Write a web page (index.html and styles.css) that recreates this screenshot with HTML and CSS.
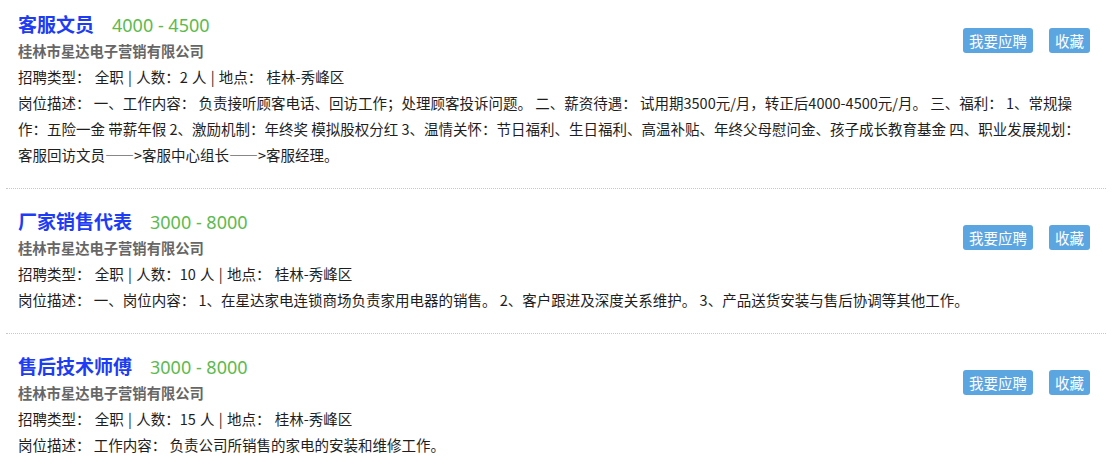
FILE: index.html
```html
<!DOCTYPE html>
<html lang="zh-CN">
<head>
<meta charset="utf-8">
<title>职位列表</title>
<link rel="stylesheet" href="styles.css">
</head>
<body>
<div class="job-list">
  <div class="job">
    <div class="actions">
      <a class="btn">我要应聘</a>
      <a class="btn">收藏</a>
    </div>
    <div class="title-row"><span class="title">客服文员</span><span class="salary">4000 - 4500</span></div>
    <div class="company">桂林市星达电子营销有限公司</div>
    <div class="meta">招聘类型： 全职 | 人数：2 人 | 地点： 桂林-秀峰区</div>
    <div class="desc">岗位描述： 一、工作内容： 负责接听顾客电话、回访工作；处理顾客投诉问题。 二、薪资待遇： 试用期3500元/月，转正后4000-4500元/月。 三、福利： 1、常规操作：五险一金 带薪年假 2、激励机制：年终奖 模拟股权分红 3、温情关怀：节日福利、生日福利、高温补贴、年终父母慰问金、孩子成长教育基金 四、职业发展规划：客服回访文员——&gt;客服中心组长——&gt;客服经理。</div>
  </div>
  <div class="job">
    <div class="actions">
      <a class="btn">我要应聘</a>
      <a class="btn">收藏</a>
    </div>
    <div class="title-row"><span class="title">厂家销售代表</span><span class="salary">3000 - 8000</span></div>
    <div class="company">桂林市星达电子营销有限公司</div>
    <div class="meta">招聘类型： 全职 | 人数：10 人 | 地点： 桂林-秀峰区</div>
    <div class="desc">岗位描述： 一、岗位内容： 1、在星达家电连锁商场负责家用电器的销售。 2、客户跟进及深度关系维护。 3、产品送货安装与售后协调等其他工作。</div>
  </div>
  <div class="job">
    <div class="actions">
      <a class="btn">我要应聘</a>
      <a class="btn">收藏</a>
    </div>
    <div class="title-row"><span class="title">售后技术师傅</span><span class="salary">3000 - 8000</span></div>
    <div class="company">桂林市星达电子营销有限公司</div>
    <div class="meta">招聘类型： 全职 | 人数：15 人 | 地点： 桂林-秀峰区</div>
    <div class="desc">岗位描述： 工作内容： 负责公司所销售的家电的安装和维修工作。</div>
  </div>
</div>
</body>
</html>
```

FILE: styles.css
```css
html, body {
  margin: 0;
  padding: 0;
  background: #fff;
}
body {
  font-family: "Noto Sans CJK SC", "Noto Sans", sans-serif;
  font-size: 14.5px;
  color: #1e1e1e;
}
.job-list {
  padding: 0 7px 0 6px;
  margin-top: -8px;
}
.job {
  padding: 18px 16px 20px 12px;
  border-bottom: 1px dotted #c8c8c8;
}
.job:last-child {
  border-bottom: none;
}
.actions {
  float: right;
  margin-top: 18px;
  display: flex;
  gap: 16px;
}
.btn {
  display: block;
  background: #5ba6e1;
  color: #fff;
  font-size: 14.5px;
  line-height: 25px;
  height: 25px;
  padding: 0 6px;
  border-radius: 3px;
  cursor: pointer;
}
.title-row {
  line-height: 28px;
  height: 28px;
  display: flex;
  align-items: baseline;
  gap: 18px;
}
.title {
  font-size: 19px;
  font-weight: bold;
  color: #1d3cf4;
}
.salary {
  font-size: 18px;
  color: #5cba4e;
  font-family: "Noto Sans", "Noto Sans CJK SC", sans-serif;
}
.company {
  font-size: 14.3px;
  font-weight: bold;
  color: #666;
  line-height: 26px;
}
.meta, .desc {
  line-height: 26px;
}
.meta {
  word-spacing: 1px;
}
```
